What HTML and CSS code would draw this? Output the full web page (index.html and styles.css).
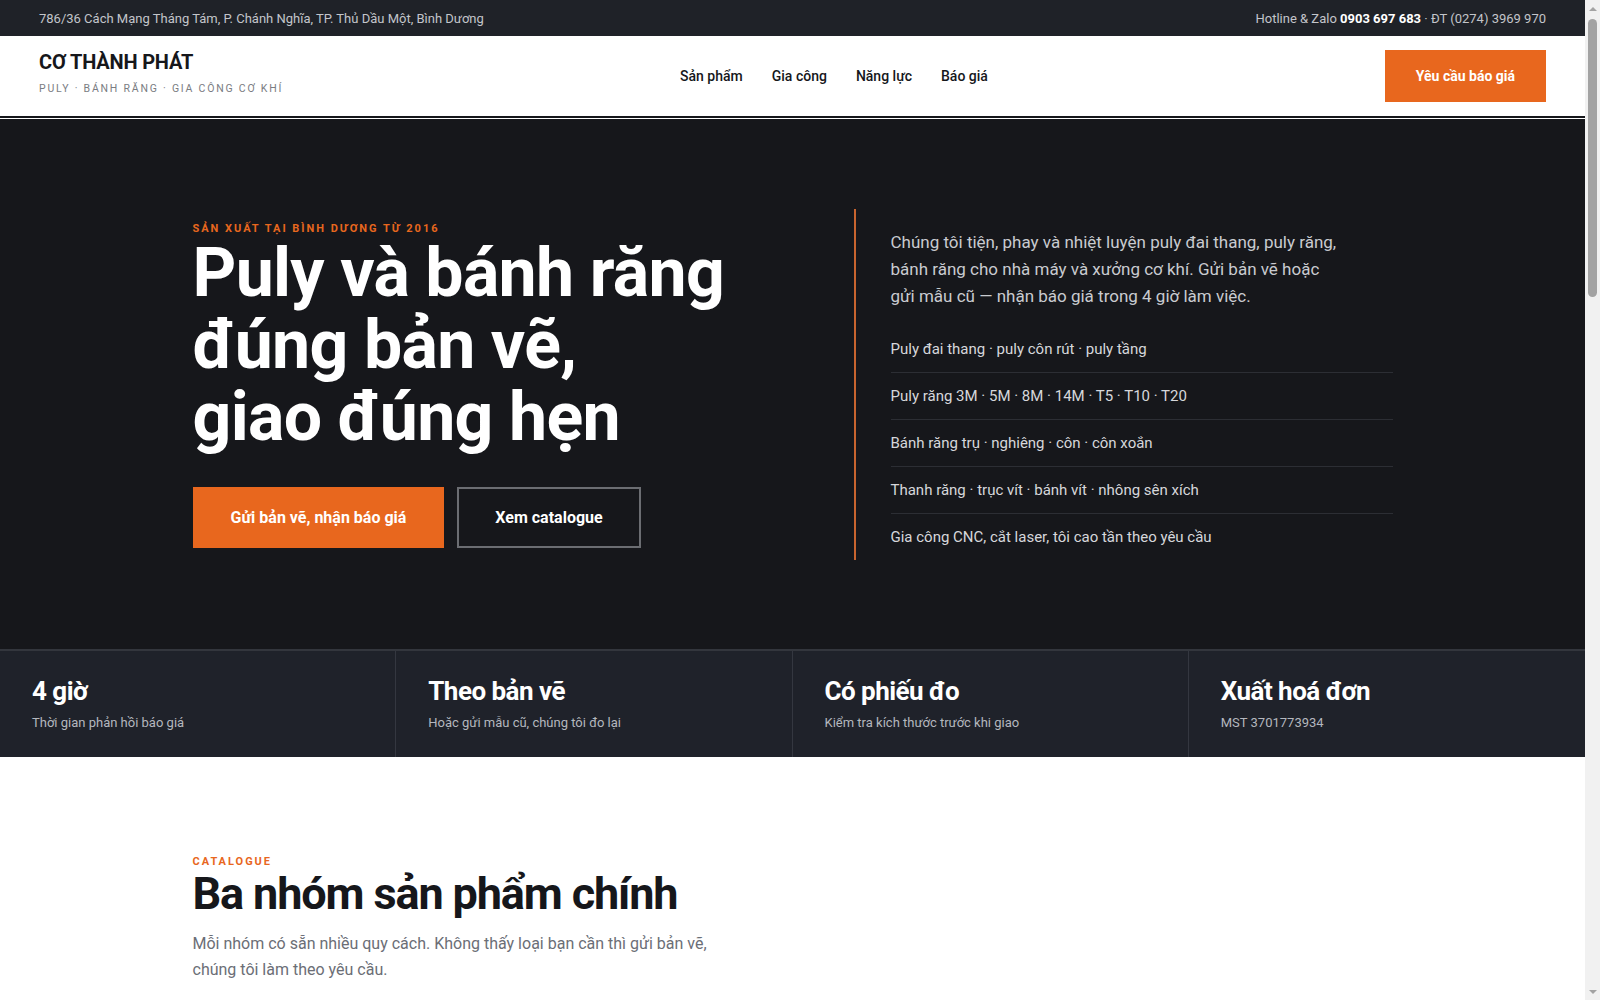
FILE: index.html
```html
<!DOCTYPE html>
<html lang="vi">
<head>
    <meta charset="UTF-8">
    <meta name="viewport" content="width=device-width, initial-scale=1.0">
    <title>Cơ Thành Phát - Puly, bánh răng, gia công cơ khí</title>
    <link rel="stylesheet" href="styles.css">
</head>
<body>
    <div class="topbar">
        <span>786/36 Cách Mạng Tháng Tám, P. Chánh Nghĩa, TP. Thủ Dầu Một, Bình Dương</span>
        <span>Hotline &amp; Zalo <b>0903 697 683</b> · ĐT (0274) 3969 970</span>
    </div>

    <header class="nav">
        <a href="#" class="brand">
            <div class="brand-name">CƠ THÀNH PHÁT</div>
            <div class="brand-tag">PULY · BÁNH RĂNG · GIA CÔNG CƠ KHÍ</div>
        </a>
        <nav class="menu">
            <a href="#san-pham">Sản phẩm</a>
            <a href="#gia-cong">Gia công</a>
            <a href="#nang-luc">Năng lực</a>
            <a href="#bao-gia">Báo giá</a>
        </nav>
        <a href="#bao-gia" class="btn btn-orange btn-small">Yêu cầu báo giá</a>
    </header>

    <section class="hero">
        <div class="container hero-grid">
            <div class="hero-left">
                <div class="eyebrow">SẢN XUẤT TẠI BÌNH DƯƠNG TỪ 2016</div>
                <h1>Puly và bánh răng<br>đúng bản vẽ,<br>giao đúng hẹn</h1>
                <div class="hero-actions">
                    <a href="#bao-gia" class="btn btn-orange">Gửi bản vẽ, nhận báo giá</a>
                    <a href="#san-pham" class="btn btn-outline">Xem catalogue</a>
                </div>
            </div>
            <div class="hero-right">
                <p>Chúng tôi tiện, phay và nhiệt luyện puly đai thang, puly răng, bánh răng cho nhà máy và xưởng cơ khí. Gửi bản vẽ hoặc gửi mẫu cũ — nhận báo giá trong 4 giờ làm việc.</p>
                <ul class="hero-list">
                    <li>Puly đai thang · puly côn rút · puly tầng</li>
                    <li>Puly răng 3M · 5M · 8M · 14M · T5 · T10 · T20</li>
                    <li>Bánh răng trụ · nghiêng · côn · côn xoắn</li>
                    <li>Thanh răng · trục vít · bánh vít · nhông sên xích</li>
                    <li>Gia công CNC, cắt laser, tôi cao tần theo yêu cầu</li>
                </ul>
            </div>
        </div>
    </section>

    <section class="stats">
        <div class="stat">
            <div class="stat-title">4 giờ</div>
            <div class="stat-text">Thời gian phản hồi báo giá</div>
        </div>
        <div class="stat">
            <div class="stat-title">Theo bản vẽ</div>
            <div class="stat-text">Hoặc gửi mẫu cũ, chúng tôi đo lại</div>
        </div>
        <div class="stat">
            <div class="stat-title">Có phiếu đo</div>
            <div class="stat-text">Kiểm tra kích thước trước khi giao</div>
        </div>
        <div class="stat">
            <div class="stat-title">Xuất hoá đơn</div>
            <div class="stat-text">MST 3701773934</div>
        </div>
    </section>

    <section class="section" id="san-pham">
        <div class="container">
            <div class="eyebrow">CATALOGUE</div>
            <h2>Ba nhóm sản phẩm chính</h2>
            <p class="section-lead">Mỗi nhóm có sẵn nhiều quy cách. Không thấy loại bạn cần thì gửi bản vẽ, chúng tôi làm theo yêu cầu.</p>

            <div class="cards">
                <div class="card">
                    <div class="card-img"></div>
                    <div class="card-num">01</div>
                    <h3>Puly đai thang</h3>
                    <p>Rãnh A, B, C, SPA, SPB, SPC. Gang, thép, nhôm. Có côn rút hoặc lỗ then.</p>
                </div>
                <div class="card">
                    <div class="card-img"></div>
                    <div class="card-num">02</div>
                    <h3>Puly răng</h3>
                    <p>Biên dạng 3M, 5M, 8M, 14M, T5, T10, T20. Nhôm hoặc thép C45.</p>
                </div>
                <div class="card">
                    <div class="card-img"></div>
                    <div class="card-num">03</div>
                    <h3>Bánh răng</h3>
                    <p>Trụ, nghiêng, côn, côn xoắn. Module 1 đến 12, tôi cao tần theo yêu cầu.</p>
                </div>
            </div>
        </div>
    </section>

    <section class="section section-gray" id="gia-cong">
        <div class="container">
            <div class="eyebrow">GIA CÔNG</div>
            <h2>Quy trình từ bản vẽ đến giao hàng</h2>
            <p class="section-lead">Bốn bước rõ ràng, có báo giá và phiếu đo đi kèm mỗi đơn hàng.</p>
            <div class="cards">
                <div class="card"><div class="card-num">BƯỚC 1</div><h3>Nhận bản vẽ</h3><p>Qua Zalo, email hoặc mang mẫu cũ đến xưởng.</p></div>
                <div class="card"><div class="card-num">BƯỚC 2</div><h3>Báo giá</h3><p>Trong 4 giờ làm việc, ghi rõ vật liệu và thời gian.</p></div>
                <div class="card"><div class="card-num">BƯỚC 3</div><h3>Gia công &amp; giao</h3><p>Kiểm tra kích thước, lập phiếu đo trước khi giao.</p></div>
            </div>
        </div>
    </section>

    <section class="section" id="nang-luc">
        <div class="container">
            <div class="eyebrow">NĂNG LỰC</div>
            <h2>Máy móc tại xưởng</h2>
            <p class="section-lead">Máy tiện CNC, phay CNC, máy phay lăn răng, máy xọc răng, lò tôi cao tần và máy cắt laser fiber.</p>
            <div class="cards">
                <div class="card"><div class="card-img"></div><h3>Tiện CNC</h3><p>Đường kính tới 800 mm.</p></div>
                <div class="card"><div class="card-img"></div><h3>Phay lăn răng</h3><p>Module 1 đến 12.</p></div>
                <div class="card"><div class="card-img"></div><h3>Tôi cao tần</h3><p>Độ cứng 45–55 HRC.</p></div>
            </div>
        </div>
    </section>

    <section class="section section-dark" id="bao-gia">
        <div class="container">
            <div class="eyebrow">BÁO GIÁ</div>
            <h2>Gửi bản vẽ, nhận báo giá trong 4 giờ</h2>
            <p class="section-lead">Hotline &amp; Zalo 0903 697 683 · ĐT (0274) 3969 970</p>
        </div>
    </section>

    <footer class="footer">
        <div class="container">© Cơ Thành Phát · MST 3701773934</div>
    </footer>

    <!-- thanh cuộn của trình duyệt trong ảnh chụp -->
    <div class="scrollbar" aria-hidden="true">
        <div class="sb-up"></div>
        <div class="sb-track"><div class="sb-thumb"></div></div>
        <div class="sb-down"></div>
    </div>
</body>
</html>
```

FILE: styles.css
```css
* {
    box-sizing: border-box;
}
body {
    margin: 0 15px 0 0;
    font-family: Roboto, "Liberation Sans", sans-serif;
    color: #16171b;
    background: #fff;
}
a {
    color: inherit;
    text-decoration: none;
}
.container {
    max-width: 1200px;
    margin: 0 auto;
}

/* top bar */
.topbar {
    display: flex;
    justify-content: space-between;
    align-items: center;
    height: 36px;
    padding: 0 39px;
    background-color: #1f2228;
    color: #c3c5ca;
    font-size: 13px;
}
.topbar b {
    color: #fff;
    font-weight: 700;
}

/* nav */
.nav {
    display: flex;
    justify-content: space-between;
    align-items: center;
    padding: 14px 39px;
    border-bottom: 2px solid #16171b;
}
.brand {
    padding-bottom: 6px;
}
.brand-name {
    font-size: 20px;
    font-weight: 700;
    line-height: 24px;
    letter-spacing: -0.01em;
}
.brand-tag {
    margin-top: 8px;
    font-size: 10.5px;
    line-height: 14px;
    letter-spacing: 0.17em;
    color: #7a7c82;
}
.menu {
    display: flex;
    gap: 29px;
    font-size: 14px;
    font-weight: 500;
}

/* buttons */
.btn {
    display: inline-block;
    font-weight: 700;
    font-size: 16px;
    line-height: 21px;
    padding: 20px 38px;
}
.btn-orange {
    background-color: #e8671e;
    color: #fff;
}
.btn-small {
    font-size: 14px;
    line-height: 20px;
    padding: 16px 31px;
}
.btn-outline {
    border: 2px solid #6b6d72;
    color: #fff;
    padding: 18px 36px;
}

/* hero */
.hero {
    margin-top: 1px;
    background-color: #16171b;
    color: #fff;
    padding: 90px 0 89px;
}
.hero-grid {
    display: grid;
    grid-template-columns: 661px 1fr;
    align-items: center;
}
.eyebrow {
    font-size: 11px;
    font-weight: 700;
    line-height: 16px;
    letter-spacing: 0.18em;
    color: #e8671e;
}
.hero h1 {
    margin: 0 0 34px;
    font-size: 68px;
    line-height: 72px;
    font-weight: 700;
    letter-spacing: -0.01em;
}
.hero-actions {
    display: flex;
    gap: 13px;
}
.hero-right {
    border-left: 2px solid #c8642f;
    padding: 20px 0 0 35px;
}
.hero-right p {
    margin: 0 0 16px;
    max-width: 450px;
    font-size: 17px;
    line-height: 27px;
    color: #c9cbd0;
}
.hero-list {
    list-style: none;
    margin: 0;
    padding: 0;
}
.hero-list li {
    font-size: 15px;
    line-height: 22px;
    padding: 12px 0;
    color: #d6d7db;
    border-bottom: 1px solid #2c2e34;
}
.hero-list li:last-child {
    border-bottom: none;
}

/* stats */
.stats {
    display: grid;
    grid-template-columns: repeat(4, 1fr);
    background-color: #1f222a;
    border-top: 2px solid #33363d;
}
.stat {
    padding: 25px 32px;
    border-right: 1px solid #343740;
}
.stat:last-child {
    border-right: none;
}
.stat-title {
    font-size: 26px;
    line-height: 30px;
    font-weight: 700;
    letter-spacing: -0.02em;
    color: #fff;
}
.stat-text {
    margin-top: 8px;
    font-size: 13px;
    line-height: 18px;
    color: #b4b7be;
}

/* sections */
.section {
    padding: 97px 0 100px;
}
.section h2 {
    margin: 0 0 13px;
    font-size: 45px;
    line-height: 48px;
    font-weight: 700;
    letter-spacing: -0.025em;
}
.section-lead {
    margin: 0;
    max-width: 540px;
    font-size: 16px;
    line-height: 26px;
    color: #6b6e76;
}
.section-gray {
    background-color: #f4f4f5;
}
.section-dark {
    background-color: #16171b;
    color: #fff;
}
.section-dark .section-lead {
    color: #c9cbd0;
}
.cards {
    display: grid;
    grid-template-columns: repeat(3, 1fr);
    gap: 24px;
    margin-top: 56px;
}
.card {
    border: 1px solid #e2e3e6;
    background: #fff;
    padding: 32px;
}
.card-img {
    height: 220px;
    margin-bottom: 24px;
    background-color: #eceded;
}
.card-num {
    font-size: 12px;
    font-weight: 700;
    color: #e8671e;
    letter-spacing: 0.15em;
}
.card h3 {
    margin: 12px 0 8px;
    font-size: 22px;
}
.card p {
    margin: 0;
    font-size: 15px;
    line-height: 24px;
    color: #6b6e76;
}
.footer {
    padding: 32px 0;
    background-color: #1f2228;
    color: #9a9da4;
    font-size: 13px;
}

/* scrollbar */
.scrollbar {
    position: fixed;
    top: 0;
    right: 0;
    width: 15px;
    height: 100vh;
    display: flex;
    flex-direction: column;
    background-color: #f1f1f1;
}
.sb-up,
.sb-down {
    height: 17px;
    display: flex;
    justify-content: center;
    align-items: center;
}
.sb-up::before,
.sb-down::before {
    content: "";
    border-left: 4px solid transparent;
    border-right: 4px solid transparent;
}
.sb-up::before {
    border-bottom: 4px solid #a3a3a3;
}
.sb-down::before {
    border-top: 4px solid #a3a3a3;
}
.sb-track {
    flex: 1;
    padding: 2px 3px;
}
.sb-thumb {
    height: 278px;
    background-color: #a3a3a3;
    border-radius: 5px;
}
```
